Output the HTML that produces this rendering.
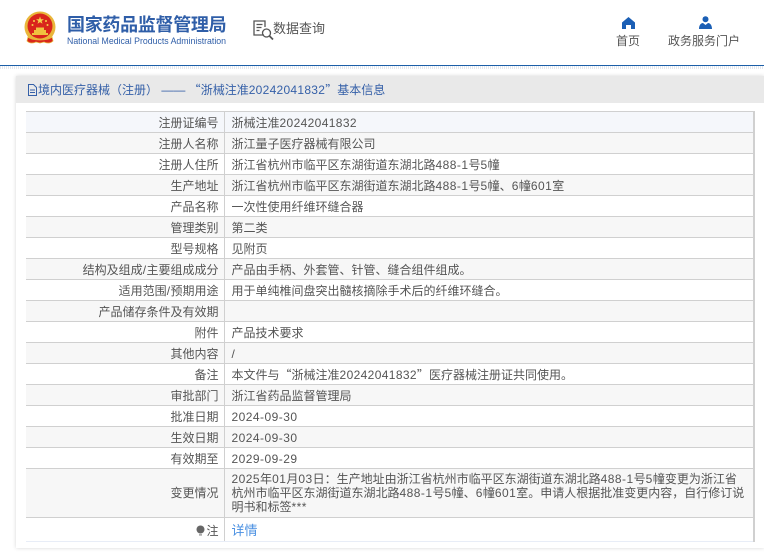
<!DOCTYPE html>
<html lang="zh">
<head>
<meta charset="utf-8">
<style>
*{box-sizing:border-box}
html,body{margin:0;padding:0;width:764px;height:553px;overflow:hidden;background:#fff;font-family:"Liberation Sans","Noto Sans CJK SC",sans-serif}
.abs{position:absolute;white-space:nowrap}
.n{letter-spacing:.36px}
.d{letter-spacing:.46px}
.q{font-family:"Noto Sans CJK SC",sans-serif}
#line{position:absolute;left:0;top:65px;width:764px;height:1px;background:#1d5fa8}
#dots{position:absolute;left:0;top:66px;width:764px;height:3px;background:repeating-linear-gradient(90deg,#e4e8ee 0 1px,#fff 1px 2px)}
#card{position:absolute;left:16px;top:76px;width:748px;height:472px;background:#fff;box-shadow:0 0 4px rgba(0,0,0,.16)}
#bar{position:absolute;left:0;top:0;width:748px;height:27px;background:#e9e9e9;color:#3560a8;font-size:12px;line-height:28px;padding-left:22px;white-space:nowrap}
#bar .n{letter-spacing:.28px}
table{position:absolute;left:26px;top:111px;width:729px;border-collapse:collapse;table-layout:fixed;font-size:12px;color:#555}
td{height:21px;padding:1px 6px 0 7px;border-top:1px solid #d0d0d0;line-height:14px;white-space:nowrap;overflow:hidden}
td:first-child{width:198px;text-align:right;padding-right:5px;border-right:1px solid #d0d0d0;background:#fff}
td:last-child{border-right:2px solid #d0d0d0}
tr:nth-child(even) td{background:#f7f7f7}
tr:first-child td{background:#f5f7fb}
tr.multi td{height:49px;white-space:nowrap;background:#f7f7f7;padding-top:0}
tr.last td{height:24px;background:#fff;border-bottom:1px solid #e8edf7;padding-top:2px}
tr.last td:last-child{color:#4a90e2;font-size:13px;padding-top:3px}
</style>
</head>
<body>
<svg class="abs" style="left:23px;top:10px" width="34" height="37" viewBox="0 0 34 37">
<circle cx="17" cy="17" r="15.500" fill="#e9b63a"/>
<circle cx="17" cy="16" r="12.500" fill="#d9251c"/>
<polygon points="17,6.500 18,9.300 21,9.300 18.600,11 19.500,13.800 17,12.100 14.500,13.800 15.400,11 13,9.300 16,9.300" fill="#f5d14a"/>
<circle cx="11" cy="11" r="1" fill="#f5d14a"/><circle cx="23" cy="11" r="1" fill="#f5d14a"/><circle cx="9.500" cy="15" r="1" fill="#f5d14a"/><circle cx="24.500" cy="15" r="1" fill="#f5d14a"/>
<path d="M9 23h16v2H9zM11 20h12v3H11zM13 17.500h8V20h-8z" fill="#f0c33f"/>
<path d="M5 27c4 4 20 4 24 0l1 4c-3 3-7 2-9 1l-4 1-4-1c-2 1-6 2-9-1z" fill="#d9251c" stroke="#e9b63a" stroke-width=".8"/>
</svg>
<div class="abs" style="left:67px;top:13px;font-size:18px;line-height:24px;font-weight:bold;color:#2f5ea8;letter-spacing:-.3px">国家药品监督管理局</div>
<div class="abs" style="left:67px;top:35px;font-size:8.75px;line-height:12px;color:#2f5ea8">National Medical Products Administration</div>
<svg class="abs" style="left:253px;top:20px" width="21" height="21" viewBox="0 0 21 21" fill="none" stroke="#555" stroke-width="1.300">
<path d="M11 15H1V1h11v6M3.500 4.500h6M3.500 7.500h5M3.500 10.500h3"/>
<circle cx="13.500" cy="13" r="4"/>
<path d="M16.500 16l3.500 3.500" stroke-width="1.800"/>
</svg>
<div class="abs" style="left:273px;top:19px;font-size:13px;line-height:20px;color:#555">数据查询</div>
<svg class="abs" style="left:622px;top:17px" width="13" height="12" viewBox="0 0 13 12"><path d="M6.500 0L13 5.500V12H9V8H4v4H0V5.500z" fill="#1b5fb5"/></svg>
<div class="abs" style="left:616px;top:34px;font-size:12px;line-height:15px;color:#555">首页</div>
<svg class="abs" style="left:699px;top:16px" width="13" height="13" viewBox="0 0 13 13"><circle cx="6.500" cy="3.200" r="3" fill="#1b5fb5"/><path d="M0 13c0-4 2-6 4-6l2.500 2L9 7c2 0 4 2 4 6z" fill="#1b5fb5"/></svg>
<div class="abs" style="left:668px;top:34px;font-size:12px;line-height:15px;color:#555">政务服务门户</div>
<div id="line"></div>
<div id="dots"></div>
<div id="card"><div id="bar">境内医疗器械（注册） —— <span class="q">“</span>浙械注准<span class="n">20242041832</span><span class="q">”</span>基本信息</div></div>
<svg class="abs" style="left:27px;top:84px" width="11" height="12" viewBox="0 0 11 12" fill="none" stroke="#3560a8"><path d="M1.500.5h5l3 3v8h-8zM3 6h5M3 8.500h5"/></svg>
<table>
<tr><td>注册证编号</td><td>浙械注准<span class="n">20242041832</span></td></tr>
<tr><td>注册人名称</td><td>浙江量子医疗器械有限公司</td></tr>
<tr><td>注册人住所</td><td>浙江省杭州市临平区东湖街道东湖北路<span class="d">488-1</span>号<span class="d">5</span>幢</td></tr>
<tr><td>生产地址</td><td>浙江省杭州市临平区东湖街道东湖北路<span class="d">488-1</span>号<span class="d">5</span>幢、<span class="d">6</span>幢<span class="d">601</span>室</td></tr>
<tr><td>产品名称</td><td>一次性使用纤维环缝合器</td></tr>
<tr><td>管理类别</td><td>第二类</td></tr>
<tr><td>型号规格</td><td>见附页</td></tr>
<tr><td>结构及组成<span class="d">/</span>主要组成成分</td><td>产品由手柄、外套管、针管、缝合组件组成。</td></tr>
<tr><td>适用范围<span class="d">/</span>预期用途</td><td>用于单纯椎间盘突出髓核摘除手术后的纤维环缝合。</td></tr>
<tr><td>产品储存条件及有效期</td><td></td></tr>
<tr><td>附件</td><td>产品技术要求</td></tr>
<tr><td>其他内容</td><td>/</td></tr>
<tr><td>备注</td><td>本文件与<span class="q">“</span>浙械注准<span class="n">20242041832</span><span class="q">”</span>医疗器械注册证共同使用。</td></tr>
<tr><td>审批部门</td><td>浙江省药品监督管理局</td></tr>
<tr><td>批准日期</td><td><span class="d">2024-09-30</span></td></tr>
<tr><td>生效日期</td><td><span class="d">2024-09-30</span></td></tr>
<tr><td>有效期至</td><td><span class="d">2029-09-29</span></td></tr>
<tr class="multi"><td>变更情况</td><td><span class="d">2025</span>年<span class="d">01</span>月<span class="d">03</span>日：生产地址由浙江省杭州市临平区东湖街道东湖北路<span class="d">488-1</span>号<span class="d">5</span>幢变更为浙江省<br>杭州市临平区东湖街道东湖北路<span class="d">488-1</span>号<span class="d">5</span>幢、<span class="d">6</span>幢<span class="d">601</span>室。申请人根据批准变更内容，自行修订说<br>明书和标签<span class="d">***</span></td></tr>
<tr class="last"><td><svg width="9" height="11" viewBox="0 0 9 11" style="vertical-align:-1px;margin-right:1px"><circle cx="4.500" cy="4.500" r="4" fill="#666"/><rect x="3" y="9.300" width="3" height="1.200" fill="#888"/></svg>注</td><td>详情</td></tr>
</table>
</body>
</html>
